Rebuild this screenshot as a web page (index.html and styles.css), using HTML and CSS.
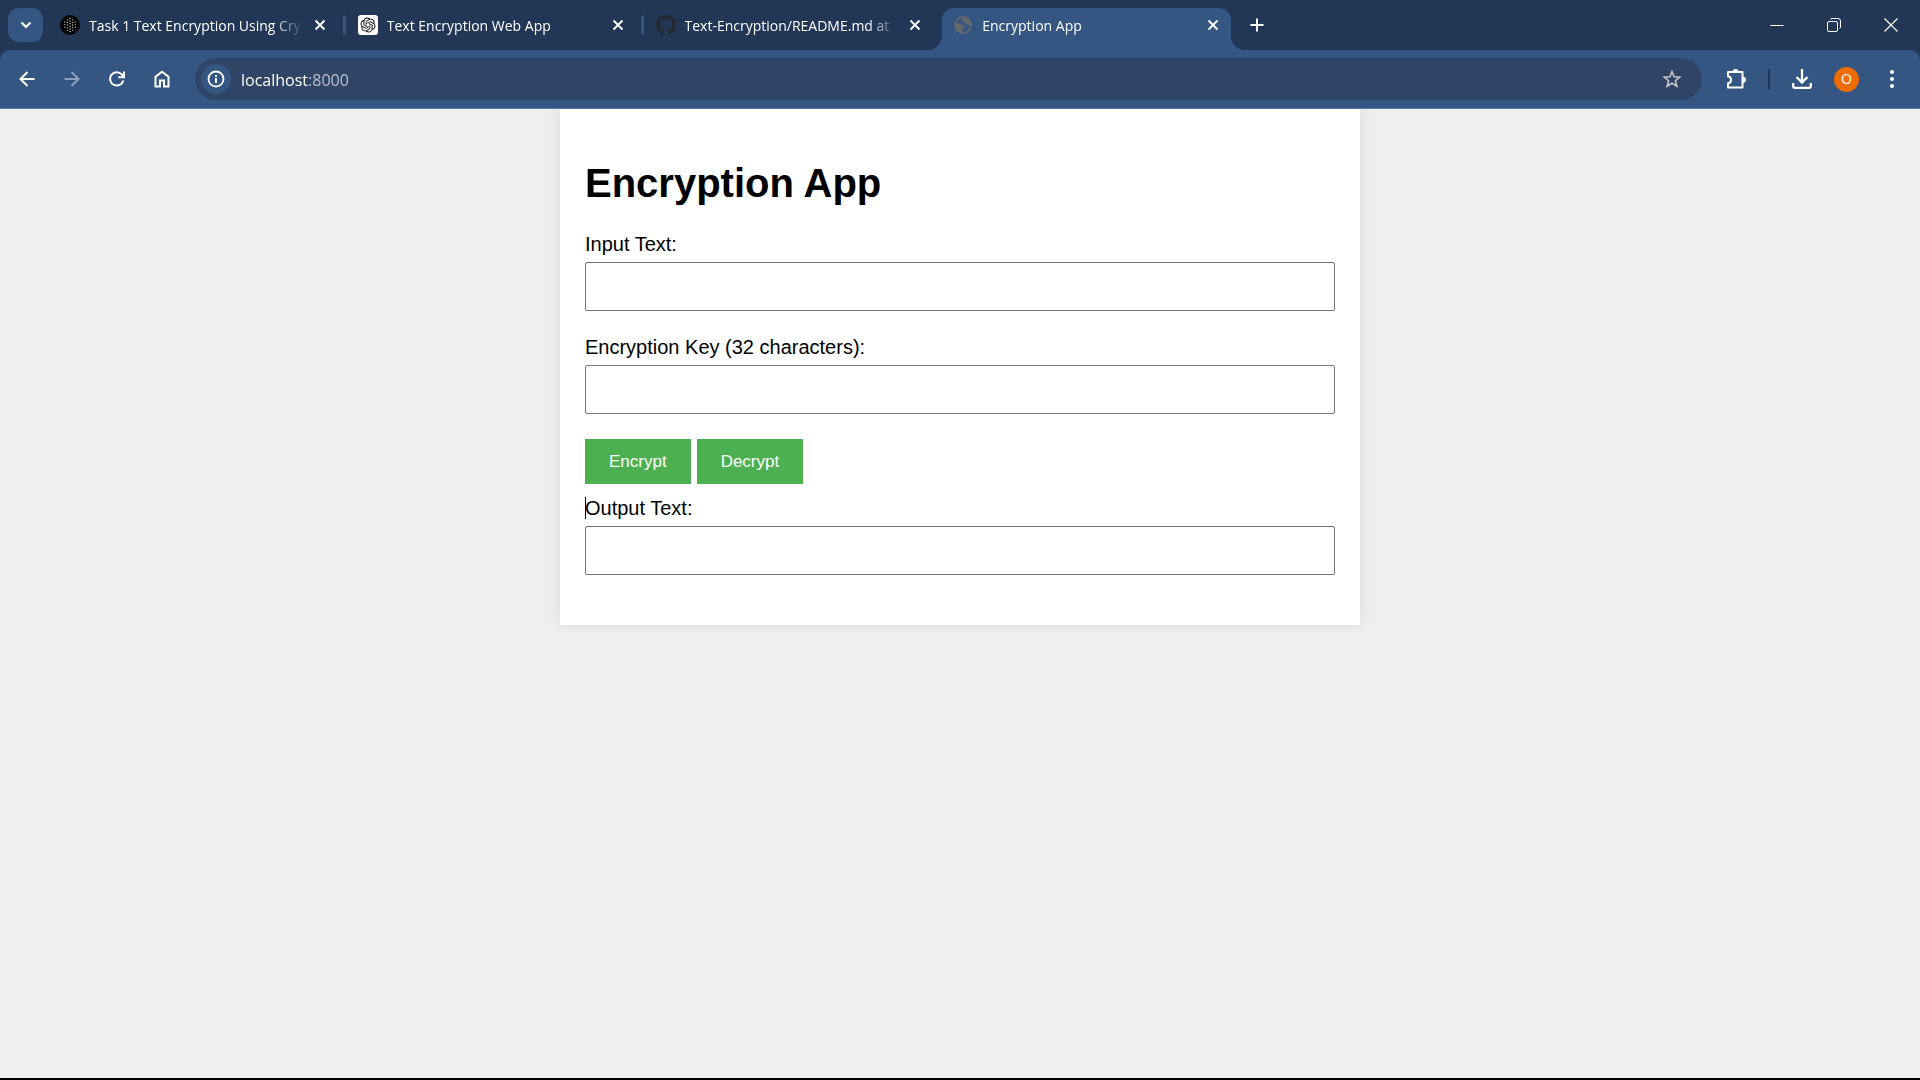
FILE: index.html
```html
<!DOCTYPE html>
<html lang="en">
<head>
<meta charset="utf-8">
<title>Encryption App</title>
<link rel="stylesheet" href="styles.css">
</head>
<body>
<svg class="defs" width="0" height="0" aria-hidden="true">
  <defs>
    <symbol id="close" viewBox="0 0 12 12"><path d="M1.5 1.5l9 9M10.5 1.5l-9 9" fill="none" stroke="currentColor" stroke-width="1.9"/></symbol>
  </defs>
</svg>
<div class="window">
  <header class="browser">
    <div class="tabstrip">
      <button class="tab-search" aria-label="Search tabs"><svg width="14" height="14" viewBox="0 0 14 14"><path d="M2.5 4.5L7 9l4.5-4.5" fill="none" stroke="currentColor" stroke-width="2.2"/></svg></button>
      <div class="tabs" role="tablist">
        <div class="tab" role="tab">
          <svg class="favicon" viewBox="0 0 20 20"><circle cx="10" cy="10" r="10" fill="#050505"/><g fill="none" stroke="#bbb" stroke-width="1.3" stroke-linecap="round"><path stroke-dasharray="0 2.600" d="M4.800 7v6.500M15.200 7v6.500"/><path stroke-dasharray="0 2.600" d="M7.400 4.800v11M12.600 4.800v11"/><path stroke="#e4e4e4" stroke-dasharray="0 2.600" d="M10 3.500v13.500"/></g></svg>
          <span class="tab-title">Task 1 Text Encryption Using Cry</span>
          <button class="tab-close" aria-label="Close tab"><svg width="12" height="12"><use href="#close"/></svg></button>
        </div>
        <div class="tab divided" role="tab">
          <svg class="favicon" viewBox="0 0 20 20"><rect width="20" height="20" rx="3" fill="#fff"/><g transform="translate(2.5 2.5) scale(.625)"><path fill="#111" d="M22.2819 9.8211a5.9847 5.9847 0 0 0-.5157-4.9108 6.0462 6.0462 0 0 0-6.5098-2.9A6.0651 6.0651 0 0 0 4.9807 4.1818a5.9847 5.9847 0 0 0-3.9977 2.9 6.0462 6.0462 0 0 0 .7427 7.0966 5.98 5.98 0 0 0 .511 4.9107 6.051 6.051 0 0 0 6.5146 2.9001A5.9847 5.9847 0 0 0 13.2599 24a6.0557 6.0557 0 0 0 5.7718-4.2058 5.9894 5.9894 0 0 0 3.9977-2.9001 6.0557 6.0557 0 0 0-.7475-7.0729zm-9.022 12.6081a4.4755 4.4755 0 0 1-2.8764-1.0408l.1419-.0804 4.7783-2.7582a.7948.7948 0 0 0 .3927-.6813v-6.7369l2.02 1.1686a.071.071 0 0 1 .038.052v5.5826a4.504 4.504 0 0 1-4.4945 4.4944zm-9.6607-4.1254a4.4708 4.4708 0 0 1-.5346-3.0137l.142.0852 4.783 2.7582a.7712.7712 0 0 0 .7806 0l5.8428-3.3685v2.3324a.0804.0804 0 0 1-.0332.0615L9.74 19.9502a4.4992 4.4992 0 0 1-6.1408-1.6464zM2.3408 7.8956a4.485 4.485 0 0 1 2.3655-1.9728V11.6a.7664.7664 0 0 0 .3879.6765l5.8144 3.3543-2.0201 1.1685a.0757.0757 0 0 1-.071 0l-4.8303-2.7865A4.504 4.504 0 0 1 2.3408 7.872zm16.5963 3.8558L13.1038 8.364 15.1192 7.2a.0757.0757 0 0 1 .071 0l4.8303 2.7913a4.4944 4.4944 0 0 1-.6765 8.1042v-5.6772a.79.79 0 0 0-.407-.667zm2.0107-3.0231l-.142-.0852-4.7735-2.7818a.7759.7759 0 0 0-.7854 0L9.409 9.2297V6.8974a.0662.0662 0 0 1 .0284-.0615l4.8303-2.7866a4.4992 4.4992 0 0 1 6.6802 4.66zM8.3065 12.863l-2.02-1.1638a.0804.0804 0 0 1-.038-.0567V6.0742a4.4992 4.4992 0 0 1 7.3757-3.4537l-.142.0805L8.704 5.459a.7948.7948 0 0 0-.3927.6813zm1.0976-2.3654l2.602-1.4998 2.6069 1.4998v2.9994l-2.5974 1.4997-2.6067-1.4997Z"/></g></svg>
          <span class="tab-title">Text Encryption Web App</span>
          <button class="tab-close" aria-label="Close tab"><svg width="12" height="12"><use href="#close"/></svg></button>
        </div>
        <div class="tab divided" role="tab">
          <svg class="favicon" viewBox="0 0 16 16"><path fill="#24292e" d="M8 0C3.58 0 0 3.58 0 8c0 3.54 2.29 6.53 5.47 7.59.4.07.55-.17.55-.38 0-.19-.01-.82-.01-1.49-2.01.37-2.53-.49-2.69-.94-.09-.23-.48-.94-.82-1.13-.28-.15-.68-.52-.01-.53.63-.01 1.08.58 1.23.82.72 1.21 1.87.87 2.33.66.07-.52.28-.87.51-1.07-1.78-.2-3.64-.89-3.64-3.95 0-.87.31-1.59.82-2.15-.08-.2-.36-1.02.08-2.12 0 0 .67-.21 2.2.82.64-.18 1.32-.27 2-.27s1.36.09 2 .27c1.53-1.04 2.2-.82 2.2-.82.44 1.1.16 1.92.08 2.12.51.56.82 1.27.82 2.15 0 3.07-1.87 3.75-3.65 3.95.29.25.54.73.54 1.48 0 1.07-.01 1.93-.01 2.2 0 .21.15.46.55.38A8.01 8.01 0 0 0 16 8c0-4.42-3.58-8-8-8z"/></svg>
          <span class="tab-title">Text-Encryption/README.md at</span>
          <button class="tab-close" aria-label="Close tab"><svg width="12" height="12"><use href="#close"/></svg></button>
        </div>
        <div class="tab active" role="tab" aria-selected="true">
          <svg class="favicon" viewBox="0 0 20 20"><circle cx="10" cy="10" r="8" fill="none" stroke="#676a6d" stroke-width="1.8"/><path fill="#676a6d" d="M2 8.5h4.5c1 0 1.5.8 1.5 1.7h2c1 0 1.700.8 1.700 1.700v1.200H9.500v2.700c0 1-.6 1.700-1.500 1.900A8 8 0 0 1 2 8.500zM11 2.200c-.3 1.800-1.500 2-2.700 2.200v2h3.200c.3 1.700 1 2.400 2.500 2.400.5 1.700 1.800 1.900 4 1.500A8 8 0 0 0 11 2.200z"/></svg>
          <span class="tab-title">Encryption App</span>
          <button class="tab-close" aria-label="Close tab"><svg width="12" height="12"><use href="#close"/></svg></button>
        </div>
      </div>
      <button class="new-tab" aria-label="New tab"><svg width="14" height="14" viewBox="0 0 14 14"><path d="M7 .5v13M.5 7h13" stroke="currentColor" stroke-width="2"/></svg></button>
      <div class="window-controls">
        <button aria-label="Minimize"><svg width="14" height="14" viewBox="0 0 14 14"><path d="M.5 7.500h13" stroke="currentColor"/></svg></button>
        <button aria-label="Restore"><svg width="14" height="14" viewBox="0 0 14 14" fill="none" stroke="currentColor"><rect x=".5" y="3.500" width="10" height="10" rx="1.500"/><path d="M3.500 1.500q.4-1 1.500-1h6a2.500 2.500 0 0 1 2.500 2.500v6q0 1.100-1 1.500"/></svg></button>
        <button aria-label="Close window"><svg width="14" height="14" viewBox="0 0 14 14"><path d="M.5.5l13 13M13.500.5l-13 13" stroke="currentColor" stroke-width="1.200"/></svg></button>
      </div>
    </div>
    <nav class="toolbar" aria-label="Browser toolbar">
      <button class="tool" aria-label="Back"><svg width="16" height="16" viewBox="0 0 16 16"><path d="M15.500 8H2M8.500 1L1.500 8l7 7" fill="none" stroke="currentColor" stroke-width="2"/></svg></button>
      <button class="tool" aria-label="Forward" disabled><svg width="16" height="16" viewBox="0 0 16 16"><path d="M.5 8H14M7.500 1l7 7-7 7" fill="none" stroke="currentColor" stroke-width="2"/></svg></button>
      <button class="tool" aria-label="Reload"><svg width="16" height="16" viewBox="0 0 16 16"><path d="M14.300 9.500A6.700 6.700 0 1 1 12.800 3.400L14.500 5.500M15 .5V6.200H9.300" fill="none" stroke="currentColor" stroke-width="2"/></svg></button>
      <button class="tool" aria-label="Home"><svg width="16" height="18" viewBox="0 0 16 18"><path d="M1.500 16.500V6.800L8 1.700l6.500 5.100v9.700H10v-6H6v6z" fill="none" stroke="currentColor" stroke-width="2"/></svg></button>
      <div class="address">
        <button class="site-info" aria-label="View site information"><svg width="18" height="18" viewBox="0 0 18 18"><circle cx="9" cy="9" r="7.500" fill="none" stroke="currentColor" stroke-width="1.800"/><path d="M9 8v5M9 5v2" stroke="currentColor" stroke-width="1.900"/></svg></button>
        <input class="url" type="text" value="localhost:8000" aria-label="Address">
        <button class="bookmark" aria-label="Bookmark this tab"><svg width="20" height="20" viewBox="0 0 20 20"><path d="M10 2.500l2.100 5.200 5.600.4-4.300 3.600 1.400 5.500L10 14.200l-4.800 3 1.400-5.500L2.300 8.100l5.600-.4z" fill="none" stroke="currentColor" stroke-width="1.600"/></svg></button>
      </div>
      <button class="tool" aria-label="Extensions"><svg width="22" height="22" viewBox="0 0 22 22"><path d="M2 4h14.500v15.500H2v-4.200c4-.3 4-6.800 0-7.100z" fill="none" stroke="currentColor" stroke-width="2" stroke-linejoin="round"/><path d="M6.500 4a3 3 0 0 1 6 0zM17 8.700a3 3 0 0 1 0 6z" fill="currentColor"/></svg></button>
      <span class="divider"></span>
      <button class="tool" aria-label="Downloads"><svg width="20" height="20" viewBox="0 0 20 20"><path d="M10 0v13M4.500 8l5.500 5.500L15.500 8M1.200 14v3.500q0 1.300 1.300 1.300h15q1.300 0 1.300-1.300V14" fill="none" stroke="currentColor" stroke-width="2.300"/></svg></button>
      <button class="tool" aria-label="Profile"><span class="avatar">O</span></button>
      <button class="tool" aria-label="Menu"><svg width="4" height="18" viewBox="0 0 4 18" fill="currentColor"><circle cx="2" cy="2" r="2"/><circle cx="2" cy="9" r="2"/><circle cx="2" cy="16" r="2"/></svg></button>
    </nav>
  </header>
  <main class="page">
    <form class="card">
      <h1>Encryption App</h1>
      <label for="input-text">Input Text:</label>
      <input class="field" id="input-text" type="text">
      <label for="key">Encryption Key (32 characters):</label>
      <input class="field" id="key" type="text">
      <div class="actions">
        <button type="button" class="action">Encrypt</button>
        <button type="button" class="action">Decrypt</button>
      </div>
      <label class="with-caret" for="output-text">Output Text:</label>
      <input class="field" id="output-text" type="text" readonly>
    </form>
  </main>
</div>
</body>
</html>
```
FILE: styles.css
```css
* { box-sizing: border-box; }

body { margin: 0; background: #efefef; }

button {
  padding: 0;
  border: 0;
  background: none;
  color: inherit;
  font: inherit;
  display: flex;
  align-items: center;
  justify-content: center;
}

.defs { position: absolute; }

.window {
  min-height: 100vh;
  display: flex;
  flex-direction: column;
  border-bottom: 2px solid #000;
}

/* Browser frame */
.browser {
  background: #223756;
  color: #fff;
  font: 14px/20px "Open Sans", "Noto Sans", sans-serif;
}

.tabstrip { display: flex; height: 50px; padding-left: 8px; }

.tab-search {
  width: 35px;
  height: 34px;
  margin: 8px 2px 0 0;
  border-radius: 11px;
  background: #355583;
}

.tabs { display: flex; flex: 0 1 1191px; min-width: 0; }

.tab {
  position: relative;
  flex: 1 1 0;
  min-width: 0;
  display: flex;
  align-items: center;
  padding: 0 13px 0 15px;
}

.tab.divided::before {
  content: "";
  position: absolute;
  left: 0;
  top: 15px;
  width: 3px;
  height: 20px;
  border-radius: 2px;
  background: #355583;
}

.favicon { flex: none; width: 20px; height: 20px; }

.tab-title {
  flex: 1;
  min-width: 0;
  margin: 0 6px 0 9px;
  padding-top: 2px;
  overflow: hidden;
  white-space: nowrap;
  mask-image: linear-gradient(to right, #000 calc(100% - 32px), transparent);
}

.tab-close { flex: none; width: 20px; height: 20px; }

.tab.active { isolation: isolate; }

.tab.active::before {
  content: "";
  position: absolute;
  z-index: -1;
  inset: 8px 5px 0 4px;
  border-radius: 12px 12px 0 0;
  background: #355583;
}

.tab.active::after {
  content: "";
  position: absolute;
  z-index: -1;
  inset: auto -9px 0 -10px;
  height: 14px;
  background:
    radial-gradient(circle at 0 0, transparent 14px, #355583 14px) left / 14px 14px no-repeat,
    radial-gradient(circle at 100% 0, transparent 14px, #355583 14px) right / 14px 14px no-repeat;
}

.new-tab { width: 42px; }

.window-controls { display: flex; margin-left: auto; padding-right: 1px; }
.window-controls button { width: 57px; height: 49px; }

.toolbar {
  display: flex;
  align-items: center;
  height: 59px;
  padding: 0 6px 0 4px;
  border-bottom: 1px solid #5a76a0;
  border-radius: 10px 10px 0 0;
  background: #355583;
}

.tool { flex: none; width: 45px; height: 45px; }
.tool:disabled { color: #8ba0be; }

.address {
  flex: 1;
  display: flex;
  align-items: center;
  height: 42px;
  margin: 0 12px 0 11px;
  padding: 0 20px 0 6px;
  border-radius: 21px;
  background: #304566;
}

.site-info {
  flex: none;
  width: 30px;
  height: 30px;
  border-radius: 50%;
  background: #355583;
}

.url {
  flex: 1;
  min-width: 0;
  margin-left: 10px;
  padding: 1px 0 0;
  border: 0;
  background: none;
  color: #fff;
  font: 16px/24px "Open Sans", "Noto Sans", sans-serif;
  mask-image: linear-gradient(to right, #000 68px, rgba(0, 0, 0, .65) 68px);
}

.bookmark { color: #c7c7c7; }

.divider { width: 2px; height: 20px; margin: 0 9px; background: #223756; }

.avatar {
  width: 25px;
  height: 25px;
  border-radius: 50%;
  background: #ef6c00;
  font-size: 14px;
  line-height: 24px;
}

/* Encryption page */
.page {
  flex: 1;
  overflow: hidden;
  font: 20px/23px "Liberation Sans", Arial, sans-serif;
  color: #000;
}

.card {
  max-width: 800px;
  margin: 0 auto;
  padding: 25px;
  background: #fff;
  box-shadow: 0 0 13px rgba(0, 0, 0, .1);
}

h1 { margin: 27px 0; font-size: 40px; line-height: 45px; }

label { display: block; margin-bottom: 6px; }

.field {
  display: block;
  width: 100%;
  height: 49px;
  margin-bottom: 25px;
  padding: 12px;
  border: 1px solid #767676;
  border-radius: 2px;
  background: #fff;
  font: inherit;
}

.actions { display: flex; gap: 6px; margin-bottom: 13px; }

.action {
  padding: 13px 24px;
  background: #4caf50;
  color: #fff;
  font-size: 17px;
  line-height: 19px;
}

.with-caret { position: relative; }

.with-caret::before {
  content: "";
  position: absolute;
  left: 0;
  top: 0;
  width: 1px;
  height: 22px;
  background: #000;
}
```
